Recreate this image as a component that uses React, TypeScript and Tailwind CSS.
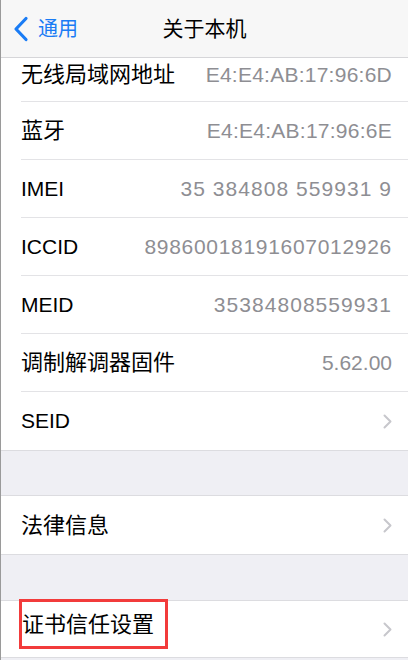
import React from "react";

const font = { fontFamily: '"Liberation Sans", "Noto Sans CJK SC", sans-serif' };

function Chevron() {
  return (
    <svg width="9" height="15" viewBox="0 0 9 15" className="shrink-0">
      <path d="M1.5 1.5 L7.5 7.5 L1.5 13.5" fill="none" stroke="#c7c7cc" strokeWidth="2" strokeLinecap="round" strokeLinejoin="round" />
    </svg>
  );
}

function Row({ label, value, chevron, last, extraClass, cjk, track }: { label: React.ReactNode; value?: string; chevron?: boolean; last?: boolean; extraClass?: string; cjk?: boolean; track?: string }) {
  return (
    <div className={`flex h-[58px] items-center pl-[20px] ${extraClass ?? ""}`}>
      <div className={`flex h-full flex-1 items-center pr-[16px] ${last ? "" : "border-b border-[#e3e3e6]"}`}>
        <div className={`flex-1 text-black ${cjk ? "text-[22px]" : "text-[21px]"}`}>{label}</div>
        {value && <div className={`text-[21px] text-[#8e8e93] ${track ?? ""}`}>{value}</div>}
        {chevron && <Chevron />}
      </div>
    </div>
  );
}

export default function App() {
  return (
    <div className="h-[660px] w-[408px] overflow-hidden border-l border-[#9a9a9a] bg-[#efeff4]" style={font}>
      <div className="relative flex h-[58px] items-center border-b border-[#d6d6d9] bg-[#f7f7f7]">
        <div className="flex items-center pl-[12px]">
          <svg width="16" height="26" viewBox="0 0 16 26">
            <path d="M13 2.5 L3 13 L13 23.5" fill="none" stroke="#1a7cf5" strokeWidth="3.2" strokeLinecap="round" strokeLinejoin="round" />
          </svg>
          <span className="ml-[9px] text-[20px] text-[#1a7cf5]">通用</span>
        </div>
        <div className="pointer-events-none absolute inset-x-0 top-0 flex h-full items-center justify-center">
          <span className="text-[21px] text-black">关于本机</span>
        </div>
      </div>
      <div className="bg-white">
        <div className="flex h-[44px] pl-[20px]">
          <div className="flex flex-1 items-center border-b border-[#e3e3e6] pb-[10px] pr-[16px]">
            <div className="flex-1 text-[22px] text-black">无线局域网地址</div>
            <div className="text-[21px] tracking-[0.25px] text-[#8e8e93]">E4:E4:AB:17:96:6D</div>
          </div>
        </div>
        <Row label="蓝牙" value="E4:E4:AB:17:96:6E" cjk track="tracking-[0.25px]" />
        <Row label="IMEI" value="35 384808 559931 9" track="tracking-[1.05px]" />
        <Row label="ICCID" value="89860018191607012926" track="tracking-[0.7px]" />
        <Row label="MEID" value="35384808559931" track="tracking-[1.05px]" />
        <Row label="调制解调器固件" value="5.62.00" cjk />
        <Row label="SEID" chevron last extraClass="h-[57px]" />
      </div>
      <div className="h-[46px] border-y border-[#dcdce0]" />
      <div className="bg-white">
        <Row label="法律信息" chevron last extraClass="h-[56px]" cjk />
      </div>
      <div className="h-[47px] border-y border-[#dcdce0]" />
      <div className="border-b border-[#dcdce0] bg-white">
        <div className="flex h-[56px] items-center pl-[18px] pr-[16px]">
          <div className="flex h-full flex-1 items-start">
            <span className="-mt-[2px] inline-flex h-[50px] items-center border-[3px] border-[#f23b3b] pl-[0px] pr-[11px] text-[22px] text-black">证书信任设置</span>
          </div>
          <Chevron />
        </div>
      </div>
    </div>
  );
}
